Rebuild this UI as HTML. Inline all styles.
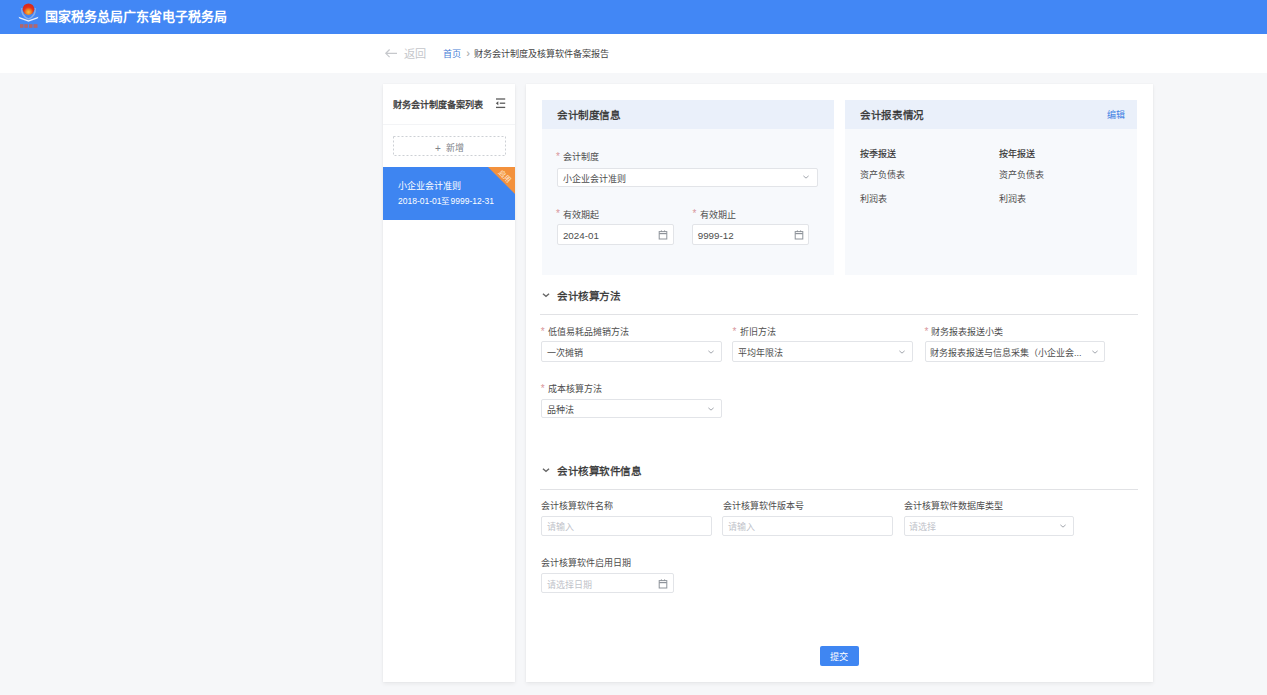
<!DOCTYPE html>
<html lang="zh-CN"><head><meta charset="utf-8">
<style>
*{margin:0;padding:0;box-sizing:border-box}
html,body{width:1267px;height:695px;overflow:hidden;background:#f6f7f9;font-family:"Liberation Sans",sans-serif;color:#333;position:relative}
.a{position:absolute}
.t{position:absolute;white-space:nowrap}
svg.a{overflow:visible}
</style></head><body>
<div class="a" style="left:0px;top:0px;width:1267.00px;height:34.00px;background:#4287f5"></div>
<svg class="a" style="left:14px;top:0px" width="30" height="34" viewBox="0 0 30 34">
<defs><radialGradient id="g1" cx="0.5" cy="0.75" r="0.6"><stop offset="0" stop-color="#f7c23c"/><stop offset="0.35" stop-color="#ef8a28"/><stop offset="0.7" stop-color="#e2321c"/><stop offset="1" stop-color="#d82a1e"/></radialGradient></defs>
<path d="M7.8 8 Q7 16 14.5 19 M21.2 8 Q22 16 14.5 19" fill="none" stroke="#b4c6e4" stroke-width="1.4" opacity="0.6"/>
<circle cx="14.5" cy="9.2" r="5.8" fill="url(#g1)"/>
<path d="M4.5 16.8 L14.5 20.2 L24.5 16.8 L23.5 18.6 L14.5 21.8 L5.5 18.6Z" fill="#e9f0fb"/>
<g fill="#cf5e4a" opacity="0.8"><rect x="6" y="24.2" width="3.5" height="3.6"/><rect x="10.3" y="24.2" width="3.5" height="3.6"/><rect x="15" y="24.2" width="3.5" height="3.6"/><rect x="19.5" y="24.2" width="4" height="3.6"/></g>
</svg>
<div class="t" style="left:45px;top:9.50px;font-size:13px;line-height:13px;color:#fff;font-weight:bold;">国家税务总局广东省电子税务局</div>
<div class="a" style="left:0px;top:34px;width:1267.00px;height:39.00px;background:#fff"></div>
<svg class="a" style="left:384px;top:48px" width="14" height="11" viewBox="0 0 14 11"><path d="M13 5.3 L1.8 5.3 M5.6 1.5 L1.8 5.3 L5.6 9.1" fill="none" stroke="#c6c8cc" stroke-width="1.2"/></svg>
<div class="t" style="left:403.7px;top:48.90px;font-size:11.2px;line-height:11.2px;color:#c4c6ca;font-weight:normal;">返回</div>
<div class="t" style="left:443px;top:49.85px;font-size:9.1px;line-height:9.1px;color:#4a80d6;font-weight:normal;">首页</div>
<div class="t" style="left:466.5px;top:49.40px;font-size:10px;line-height:10px;color:#aaa;font-weight:normal;-webkit-text-stroke:0.2px #aaa">›</div>
<div class="t" style="left:473.5px;top:50.05px;font-size:9.1px;line-height:9.1px;color:#444;font-weight:normal;">财务会计制度及核算软件备案报告</div>
<div class="a" style="left:382.5px;top:84px;width:132.50px;height:598.00px;background:#fff;box-shadow:0 2px 4px rgba(0,0,0,0.06),0 0 2px rgba(0,0,0,0.04)"></div>
<div class="t" style="left:393px;top:101.45px;font-size:9.1px;line-height:9.1px;color:#333;font-weight:normal;-webkit-text-stroke:0.3px #333">财务会计制度备案列表</div>
<svg class="a" style="left:494px;top:96px" width="13" height="13" viewBox="0 0 13 13">
<line x1="2" y1="3" x2="11.2" y2="3" stroke="#5a5a5a" stroke-width="1.3"/>
<line x1="5.8" y1="7.2" x2="11.2" y2="7.2" stroke="#5a5a5a" stroke-width="1.3"/>
<line x1="2" y1="11.4" x2="11.2" y2="11.4" stroke="#5a5a5a" stroke-width="1.3"/>
<path d="M1.8 7.2 L4.3 5.2 L4.3 9.2Z" fill="#555"/>
</svg>
<div class="a" style="left:382.5px;top:124px;width:132.50px;height:1.00px;background:#f3f4f6"></div>
<svg class="a" style="left:393px;top:136px" width="113" height="20" viewBox="0 0 113 20"><rect x="0.5" y="0.5" width="112" height="19" fill="none" stroke="#cdd0d5" stroke-width="1" stroke-dasharray="2 2"/></svg>
<div class="t" style="left:435px;top:143.50px;font-size:10px;line-height:10px;color:#808389;font-weight:normal;">+</div>
<div class="t" style="left:446px;top:144.00px;font-size:9px;line-height:9px;color:#808389;font-weight:normal;">新增</div>
<div class="a" style="left:382.5px;top:167px;width:132.5px;height:52.5px;background:#3e85f1"></div>
<svg class="a" style="left:488px;top:167px" width="27" height="27" viewBox="0 0 27 27"><path d="M0 0 L27 0 L27 27Z" fill="#f3913c"/></svg>
<div class="t" style="left:497.3px;top:173.2px;width:16px;text-align:center;font-size:7.2px;line-height:7px;color:#fde7d2;transform:rotate(45deg)">启用</div>
<div class="t" style="left:398px;top:181.80px;font-size:9px;line-height:9px;color:#fff;font-weight:normal;">小企业会计准则</div>
<div class="t" style="left:398px;top:197.25px;font-size:8.5px;line-height:8.5px;color:#fff;font-weight:normal;">2018-01-01至9999-12-31</div>
<div class="a" style="left:525.5px;top:84px;width:627.50px;height:598.00px;background:#fff;box-shadow:0 2px 4px rgba(0,0,0,0.06),0 0 2px rgba(0,0,0,0.04)"></div>
<div class="a" style="left:542px;top:99.5px;width:292.00px;height:175.50px;background:#f7f9fc"></div>
<div class="a" style="left:542px;top:99.5px;width:292.00px;height:29.30px;background:#eaf0fa"></div>
<div class="t" style="left:557px;top:110.10px;font-size:10.6px;line-height:10.6px;color:#333;font-weight:normal;-webkit-text-stroke:0.3px #333;letter-spacing:-0.4px">会计制度信息</div>
<div class="t" style="left:555.9px;top:151.70px;font-size:10px;line-height:10px;color:#d9979c;font-weight:normal;">*</div>
<div class="t" style="left:562.9px;top:152.90px;font-size:9px;line-height:9px;color:#4d4d4d;font-weight:normal;">会计制度</div>
<div class="a" style="left:557.4px;top:167.6px;width:260.40px;height:19.60px;background:#fff;border:1px solid #e2e4e8;border-radius:2px"></div>
<div class="t" style="left:562.9px;top:174.70px;font-size:9px;line-height:9px;color:#4d4d4d;font-weight:normal;">小企业会计准则</div>
<svg class="a" style="left:801px;top:172.39999999999998px" width="10" height="10" viewBox="0 0 10 10"><path d="M2.38 3.87 L5 6.13 L7.62 3.87" fill="none" stroke="#a3a7ae" stroke-width="1.0"/></svg>
<div class="t" style="left:555.9px;top:209.30px;font-size:10px;line-height:10px;color:#d9979c;font-weight:normal;">*</div>
<div class="t" style="left:562.9px;top:210.50px;font-size:9px;line-height:9px;color:#4d4d4d;font-weight:normal;">有效期起</div>
<div class="t" style="left:692.5px;top:209.30px;font-size:10px;line-height:10px;color:#d9979c;font-weight:normal;">*</div>
<div class="t" style="left:699.5px;top:210.50px;font-size:9px;line-height:9px;color:#4d4d4d;font-weight:normal;">有效期止</div>
<div class="a" style="left:557.4px;top:224px;width:116.60px;height:20.50px;background:#fff;border:1px solid #e2e4e8;border-radius:2px"></div>
<div class="t" style="left:562.9px;top:231.15px;font-size:9.8px;line-height:9.8px;color:#4d4d4d;font-weight:normal;">2024-01</div>
<svg class="a" style="left:656.8px;top:229.25px" width="12" height="12" viewBox="0 0 12 12"><rect x="2.2" y="2.6" width="7.6" height="7.4" fill="none" stroke="#8e939a" stroke-width="1"/><line x1="2.2" y1="4.6" x2="9.8" y2="4.6" stroke="#8e939a" stroke-width="1.2"/><line x1="4.4" y1="1.4" x2="4.4" y2="3" stroke="#8e939a" stroke-width="1"/><line x1="7.6" y1="1.4" x2="7.6" y2="3" stroke="#8e939a" stroke-width="1"/></svg>
<div class="a" style="left:692.2px;top:224px;width:117.30px;height:20.50px;background:#fff;border:1px solid #e2e4e8;border-radius:2px"></div>
<div class="t" style="left:697.7px;top:231.15px;font-size:9.8px;line-height:9.8px;color:#4d4d4d;font-weight:normal;">9999-12</div>
<svg class="a" style="left:792.5px;top:229.25px" width="12" height="12" viewBox="0 0 12 12"><rect x="2.2" y="2.6" width="7.6" height="7.4" fill="none" stroke="#8e939a" stroke-width="1"/><line x1="2.2" y1="4.6" x2="9.8" y2="4.6" stroke="#8e939a" stroke-width="1.2"/><line x1="4.4" y1="1.4" x2="4.4" y2="3" stroke="#8e939a" stroke-width="1"/><line x1="7.6" y1="1.4" x2="7.6" y2="3" stroke="#8e939a" stroke-width="1"/></svg>
<div class="a" style="left:845px;top:99.5px;width:292.20px;height:175.50px;background:#f7f9fc"></div>
<div class="a" style="left:845px;top:99.5px;width:292.20px;height:29.30px;background:#eaf0fa"></div>
<div class="t" style="left:860.2px;top:110.10px;font-size:10.6px;line-height:10.6px;color:#333;font-weight:normal;-webkit-text-stroke:0.3px #333;letter-spacing:-0.4px">会计报表情况</div>
<div class="t" style="left:1106.8px;top:111.10px;font-size:9px;line-height:9px;color:#3d7fe3;font-weight:normal;">编辑</div>
<div class="t" style="left:860.2px;top:149.70px;font-size:9px;line-height:9px;color:#333;font-weight:normal;-webkit-text-stroke:0.15px #333">按季报送</div>
<div class="t" style="left:999.2px;top:149.70px;font-size:9px;line-height:9px;color:#333;font-weight:normal;-webkit-text-stroke:0.15px #333">按年报送</div>
<div class="t" style="left:860.2px;top:171.30px;font-size:9px;line-height:9px;color:#4d4d4d;font-weight:normal;">资产负债表</div>
<div class="t" style="left:999.2px;top:171.30px;font-size:9px;line-height:9px;color:#4d4d4d;font-weight:normal;">资产负债表</div>
<div class="t" style="left:860.2px;top:195.10px;font-size:9px;line-height:9px;color:#4d4d4d;font-weight:normal;">利润表</div>
<div class="t" style="left:999.2px;top:195.10px;font-size:9px;line-height:9px;color:#4d4d4d;font-weight:normal;">利润表</div>
<svg class="a" style="left:540.8px;top:289.8px" width="10" height="10" viewBox="0 0 10 10"><path d="M1.92 3.67 L5 6.33 L8.08 3.67" fill="none" stroke="#666" stroke-width="1.3"/></svg>
<div class="t" style="left:557.3px;top:290.70px;font-size:10.6px;line-height:10.6px;color:#333;font-weight:normal;-webkit-text-stroke:0.3px #333;letter-spacing:-0.5px">会计核算方法</div>
<div class="a" style="left:540px;top:314px;width:598.00px;height:1.00px;background:#e1e2e5"></div>
<div class="t" style="left:540.7px;top:327.10px;font-size:10px;line-height:10px;color:#d9979c;font-weight:normal;">*</div>
<div class="t" style="left:547.7px;top:328.30px;font-size:9px;line-height:9px;color:#4d4d4d;font-weight:normal;">低值易耗品摊销方法</div>
<div class="t" style="left:732.5px;top:327.10px;font-size:10px;line-height:10px;color:#d9979c;font-weight:normal;">*</div>
<div class="t" style="left:739.5px;top:328.30px;font-size:9px;line-height:9px;color:#4d4d4d;font-weight:normal;">折旧方法</div>
<div class="t" style="left:924.4px;top:327.10px;font-size:10px;line-height:10px;color:#d9979c;font-weight:normal;">*</div>
<div class="t" style="left:931.4px;top:328.30px;font-size:9px;line-height:9px;color:#4d4d4d;font-weight:normal;">财务报表报送小类</div>
<div class="a" style="left:541.4px;top:341.4px;width:180.60px;height:20.20px;background:#fff;border:1px solid #e2e4e8;border-radius:2px"></div>
<div class="t" style="left:546.9px;top:348.80px;font-size:9px;line-height:9px;color:#4d4d4d;font-weight:normal;">一次摊销</div>
<svg class="a" style="left:705.6px;top:346.5px" width="10" height="10" viewBox="0 0 10 10"><path d="M2.38 3.87 L5 6.13 L7.62 3.87" fill="none" stroke="#a3a7ae" stroke-width="1.0"/></svg>
<div class="a" style="left:732px;top:341.4px;width:181.20px;height:20.20px;background:#fff;border:1px solid #e2e4e8;border-radius:2px"></div>
<div class="t" style="left:737.5px;top:348.80px;font-size:9px;line-height:9px;color:#4d4d4d;font-weight:normal;">平均年限法</div>
<svg class="a" style="left:897px;top:346.5px" width="10" height="10" viewBox="0 0 10 10"><path d="M2.38 3.87 L5 6.13 L7.62 3.87" fill="none" stroke="#a3a7ae" stroke-width="1.0"/></svg>
<div class="a" style="left:924.6px;top:341.4px;width:180.40px;height:20.20px;background:#fff;border:1px solid #e2e4e8;border-radius:2px"></div>
<div class="t" style="left:930.1px;top:348.80px;font-size:9px;line-height:9px;color:#4d4d4d;font-weight:normal;">财务报表报送与信息采集（小企业会...</div>
<svg class="a" style="left:1089.5px;top:346.5px" width="10" height="10" viewBox="0 0 10 10"><path d="M2.38 3.87 L5 6.13 L7.62 3.87" fill="none" stroke="#a3a7ae" stroke-width="1.0"/></svg>
<div class="t" style="left:540.7px;top:383.90px;font-size:10px;line-height:10px;color:#d9979c;font-weight:normal;">*</div>
<div class="t" style="left:547.7px;top:385.10px;font-size:9px;line-height:9px;color:#4d4d4d;font-weight:normal;">成本核算方法</div>
<div class="a" style="left:541.4px;top:399.4px;width:180.60px;height:19.00px;background:#fff;border:1px solid #e2e4e8;border-radius:2px"></div>
<div class="t" style="left:546.9px;top:406.20px;font-size:9px;line-height:9px;color:#4d4d4d;font-weight:normal;">品种法</div>
<svg class="a" style="left:705.6px;top:403.9px" width="10" height="10" viewBox="0 0 10 10"><path d="M2.38 3.87 L5 6.13 L7.62 3.87" fill="none" stroke="#a3a7ae" stroke-width="1.0"/></svg>
<svg class="a" style="left:540.8px;top:465.2px" width="10" height="10" viewBox="0 0 10 10"><path d="M1.92 3.67 L5 6.33 L8.08 3.67" fill="none" stroke="#666" stroke-width="1.3"/></svg>
<div class="t" style="left:557.3px;top:465.90px;font-size:10.6px;line-height:10.6px;color:#333;font-weight:normal;-webkit-text-stroke:0.3px #333;letter-spacing:-0.5px">会计核算软件信息</div>
<div class="a" style="left:540px;top:489px;width:598.00px;height:1.00px;background:#e1e2e5"></div>
<div class="t" style="left:541.4px;top:502.10px;font-size:9px;line-height:9px;color:#4d4d4d;font-weight:normal;">会计核算软件名称</div>
<div class="t" style="left:722.5px;top:502.10px;font-size:9px;line-height:9px;color:#4d4d4d;font-weight:normal;">会计核算软件版本号</div>
<div class="t" style="left:903.6px;top:502.10px;font-size:9px;line-height:9px;color:#4d4d4d;font-weight:normal;">会计核算软件数据库类型</div>
<div class="a" style="left:541.4px;top:516.4px;width:170.50px;height:19.50px;background:#fff;border:1px solid #e2e4e8;border-radius:2px"></div>
<div class="t" style="left:546.9px;top:523.45px;font-size:9px;line-height:9px;color:#bfc3ca;font-weight:normal;">请输入</div>
<div class="a" style="left:722px;top:516.4px;width:171.00px;height:19.50px;background:#fff;border:1px solid #e2e4e8;border-radius:2px"></div>
<div class="t" style="left:727.5px;top:523.45px;font-size:9px;line-height:9px;color:#bfc3ca;font-weight:normal;">请输入</div>
<div class="a" style="left:903.6px;top:516.4px;width:170.00px;height:19.50px;background:#fff;border:1px solid #e2e4e8;border-radius:2px"></div>
<div class="t" style="left:909.1px;top:523.45px;font-size:9px;line-height:9px;color:#bfc3ca;font-weight:normal;">请选择</div>
<svg class="a" style="left:1057.7px;top:521.15px" width="10" height="10" viewBox="0 0 10 10"><path d="M2.38 3.87 L5 6.13 L7.62 3.87" fill="none" stroke="#a3a7ae" stroke-width="1.0"/></svg>
<div class="t" style="left:541.4px;top:558.90px;font-size:9px;line-height:9px;color:#4d4d4d;font-weight:normal;">会计核算软件启用日期</div>
<div class="a" style="left:541.4px;top:573.2px;width:133.10px;height:20.20px;background:#fff;border:1px solid #e2e4e8;border-radius:2px"></div>
<div class="t" style="left:546.9px;top:580.60px;font-size:9px;line-height:9px;color:#bfc3ca;font-weight:normal;">请选择日期</div>
<svg class="a" style="left:656.6px;top:578.3px" width="12" height="12" viewBox="0 0 12 12"><rect x="2.2" y="2.6" width="7.6" height="7.4" fill="none" stroke="#8e939a" stroke-width="1"/><line x1="2.2" y1="4.6" x2="9.8" y2="4.6" stroke="#8e939a" stroke-width="1.2"/><line x1="4.4" y1="1.4" x2="4.4" y2="3" stroke="#8e939a" stroke-width="1"/><line x1="7.6" y1="1.4" x2="7.6" y2="3" stroke="#8e939a" stroke-width="1"/></svg>
<div class="a" style="left:819.7px;top:646.2px;width:39.40px;height:19.80px;background:#3f86f2;border-radius:2px"></div>
<div class="t" style="left:830px;top:653.40px;font-size:9.2px;line-height:9.2px;color:#fff;font-weight:normal;">提交</div>
</body></html>
